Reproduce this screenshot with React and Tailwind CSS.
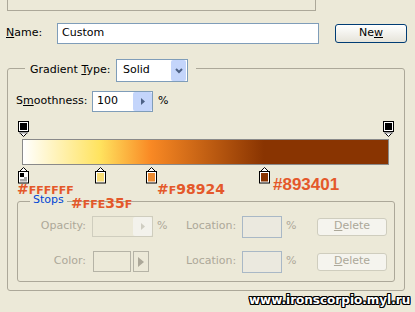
import React from "react";

const hexColor = "text-[#e4582a]";

function TopStop() {
  return (
    <svg width="12" height="16" viewBox="0 0 12 16">
      <polygon points="0.5,10.5 10.5,10.5 5.5,15.5" fill="#fff" stroke="#000" />
      <rect x="1" y="10.5" width="9" height="2" fill="#9a9a9a" />
      <rect x="0.5" y="0.5" width="10" height="10" fill="#fff" stroke="#000" />
      <rect x="2" y="2" width="7" height="7" fill="#000" />
    </svg>
  );
}

function BottomStop({ color, selected }) {
  return (
    <svg width="12" height="17" viewBox="0 0 12 17">
      <polygon points="5.5,0.5 0.5,5.5 10.5,5.5" fill="#fff" stroke="#000" />
      <rect x="0.5" y="4.5" width="10" height="11.5" fill="#fff" stroke="#000" />
      {selected ? (
        <>
          <rect x="2" y="6" width="7" height="8.5" fill="#fff" />
          <rect x="2" y="6" width="4" height="4" fill="#000" />
          <rect x="6" y="10" width="3" height="4.5" fill="#a8a8a8" />
          <rect x="2" y="12" width="4" height="2.5" fill="#a8a8a8" />
        </>
      ) : (
        <rect x="2" y="6" width="7" height="8.5" fill={color} />
      )}
    </svg>
  );
}

function Spinner({ disabled }) {
  return (
    <div
      className={`w-[19px] h-[19px] flex items-center justify-center rounded-[2px] ${
        disabled ? "bg-[#f3f2ec]" : "bg-[#c4d5fb]"
      }`}
    >
      <svg width="4" height="7" viewBox="0 0 4 7">
        <polygon points="0,0 4,3.5 0,7" fill={disabled ? "#cfcdc2" : "#4d6185"} />
      </svg>
    </div>
  );
}

function DeleteButton() {
  return (
    <div className="w-[70px] h-[18px] rounded-[3px] border border-[#cfcdbe] bg-[#f5f4ee] flex items-center justify-center text-[#aca899]">
      <span>
        <span className="underline">D</span>elete
      </span>
    </div>
  );
}

function LocationFields() {
  return (
    <>
      <span className="w-[53px]">Location:</span>
      <div className="ml-[3px] w-[40px] h-[22px] border border-[#a9b8c6] bg-[#ebe9df]" />
      <span className="w-[35px] pl-[4px]">%</span>
      <DeleteButton />
    </>
  );
}

export default function App() {
  return (
    <div className="relative w-[415px] h-[312px] overflow-hidden bg-[#ece9d8] font-['DejaVu_Sans',sans-serif] text-[11px] text-black">
      <div className="ml-[7px] w-[309px] h-[11px] border-x border-b border-[#aca899]" />

      <div className="flex items-center mt-[12px] h-[21px] pl-[6px]">
        <span className="w-[51px]">
          <span className="underline">N</span>ame:
        </span>
        <div className="w-[262px] h-[21px] border border-[#7f9db9] bg-white pl-[4px] flex items-center">
          Custom
        </div>
        <div className="ml-[16px] w-[72px] h-[19px] rounded-[3px] border border-[#003c74] bg-gradient-to-b from-white to-[#e6e4da] flex items-center justify-center">
          <span>
            Ne<span className="underline">w</span>
          </span>
        </div>
      </div>

      <div className="relative mt-[24px] ml-[7px] w-[398px] h-[223px] border border-[#aca899] rounded-[3px]">
        <div className="absolute top-[-10px] left-[17px] h-[23px] flex items-center bg-[#ece9d8] pl-[5px] pr-[8px]">
          <span className="w-[80px] whitespace-nowrap">
            Gradient <span className="underline">T</span>ype:
          </span>
          <div className="ml-[6px] w-[72px] h-[23px] border border-[#7f9db9] bg-white flex items-center">
            <span className="flex-1 pl-[6px]">Solid</span>
            <div className="mr-[1px] w-[15px] h-[21px] rounded-[2px] bg-[#c4d5fb] flex items-center justify-center">
              <svg width="8" height="6" viewBox="0 0 8 6">
                <polyline points="1,1 4,4 7,1" fill="none" stroke="#4d6185" strokeWidth="2" />
              </svg>
            </div>
          </div>
        </div>

        <div className="flex items-center mt-[22px] h-[21px] pl-[8px]">
          <span className="w-[76px]">
            S<span className="underline">m</span>oothness:
          </span>
          <div className="w-[61px] h-[21px] border border-[#7f9db9] bg-white flex items-center">
            <span className="flex-1 pl-[4px]">100</span>
            <Spinner />
          </div>
          <span className="ml-[5px]">%</span>
        </div>

        <div className="relative mt-[9px] h-[62px] pt-[18px]">
          <div className="absolute left-[10px] top-0">
            <TopStop />
          </div>
          <div className="absolute left-[375px] top-0">
            <TopStop />
          </div>
          <div className="ml-[14px] w-[367px] h-[26px] border border-[#8a8a8a] bg-[linear-gradient(to_right,#ffffff_0%,#ffe35f_21%,#f98924_35%,#893401_66%,#893401_100%)]" />
          <div className="absolute left-[10px] top-[46px]">
            <BottomStop selected />
          </div>
          <div className="absolute left-[87px] top-[46px]">
            <BottomStop color="#f8dc74" />
          </div>
          <div className="absolute left-[138px] top-[46px]">
            <BottomStop color="#ec8a2f" />
          </div>
          <div className="absolute left-[251px] top-[46px]">
            <BottomStop color="#893401" />
          </div>
        </div>

        <div className="relative mt-[18px] ml-[9px] w-[378px] h-[81px] border border-[#aca899] rounded-[3px] text-[#aca899]">
          <div className="absolute top-[-9px] left-[12px] px-[3px] bg-[#ece9d8] leading-[13px] text-[#0046d5]">
            Stops
          </div>

          <div className="flex items-center mt-[14px] h-[21px]">
            <span className="w-[68px] text-right">Opacity:</span>
            <div className="ml-[6px] w-[61px] h-[21px] border border-[#cfcdbe] bg-[#ece9d8] flex items-center justify-end">
              <Spinner disabled />
            </div>
            <span className="w-[33px] pl-[4px]">%</span>
            <LocationFields />
          </div>

          <div className="flex items-center mt-[14px] h-[21px]">
            <span className="w-[68px] text-right">Color:</span>
            <div className="ml-[7px] w-[38px] h-[21px] border border-[#b5b3a6] bg-[#ece9d8]" />
            <div className="ml-[2px] w-[16px] h-[21px] border border-[#b5b3a6] flex items-center justify-center">
              <svg width="6" height="10" viewBox="0 0 6 10">
                <polygon points="0,0 6,5 0,10" fill="#aca899" />
              </svg>
            </div>
            <span className="w-[37px]" />
            <LocationFields />
          </div>
        </div>
      </div>

      <div className={`absolute left-[17px] top-[182px] font-['DejaVu_Sans',sans-serif] font-bold text-[14px] leading-[14px] whitespace-nowrap ${hexColor}`}>
        #<span className="text-[11px]">FFFFFF</span>
      </div>
      <div className={`absolute left-[71px] top-[196px] font-['DejaVu_Sans',sans-serif] font-bold text-[14px] leading-[14px] whitespace-nowrap ${hexColor}`}>
        #<span className="text-[11px]">FFE</span>35<span className="text-[11px]">F</span>
      </div>
      <div className={`absolute left-[157px] top-[182px] font-['DejaVu_Sans',sans-serif] font-bold text-[14px] leading-[14px] whitespace-nowrap ${hexColor}`}>
        #<span className="text-[11px]">F</span>98924
      </div>
      <div className={`absolute left-[273px] top-[176px] font-['Liberation_Sans',sans-serif] font-bold text-[17px] leading-[17px] whitespace-nowrap ${hexColor}`}>
        #893401
      </div>

      <div className="absolute left-[249px] top-[293px] font-['DejaVu_Sans',sans-serif] font-bold text-[12px] leading-[15px] text-white whitespace-nowrap [text-shadow:1px_0_0_#000,-1px_0_0_#000,0_1px_0_#000,0_-1px_0_#000,1px_1px_0_#000,-1px_-1px_0_#000,1px_-1px_0_#000,-1px_1px_0_#000]">
        www.ironscorpio.myl.ru
      </div>
    </div>
  );
}
